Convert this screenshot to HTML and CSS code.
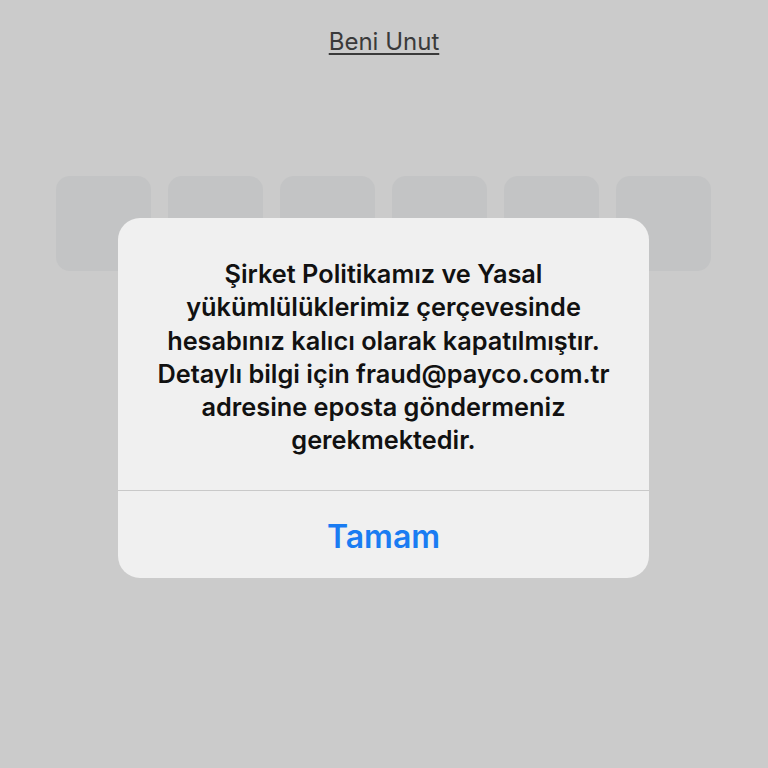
FILE: index.html
```html
<!DOCTYPE html>
<html lang="tr">
<head>
<meta charset="utf-8">
<link rel="stylesheet" href="styles.css">
</head>
<body>
<div class="screen">
  <div class="top">
    <a class="forgot">Beni Unut</a>
  </div>
  <div class="pins">
    <div class="pin"></div><div class="pin"></div><div class="pin"></div>
    <div class="pin"></div><div class="pin"></div><div class="pin"></div>
  </div>
  <div class="alert">
    <div class="message">Şirket Politikamız ve Yasal<br>yükümlülüklerimiz çerçevesinde<br>hesabınız kalıcı olarak kapatılmıştır.<br>Detaylı bilgi için fraud@payco.com.tr<br>adresine eposta göndermeniz<br>gerekmektedir.</div>
    <div class="action">Tamam</div>
  </div>
</div>
</body>
</html>
```
FILE: styles.css
```css
html, body {
  margin: 0;
  padding: 0;
}
body {
  width: 768px;
  height: 768px;
  background: #cbcbcb;
  font-family: Inter, "Noto Sans", sans-serif;
  overflow: hidden;
}
.screen {
  position: relative;
  width: 768px;
  height: 768px;
}
.top {
  display: flex;
  justify-content: center;
  padding-top: 27px;
  height: 176px;
  box-sizing: border-box;
}
.forgot {
  font-size: 24px;
  line-height: 30px;
  color: #3a3a3a;
  text-decoration: underline;
  text-underline-offset: 3px;
  text-decoration-thickness: 2px;
}
.pins {
  display: flex;
  gap: 17px;
  padding-left: 56px;
}
.pin {
  width: 95px;
  height: 95px;
  border-radius: 14px;
  background: #c3c4c5;
}
.alert {
  position: absolute;
  left: 118px;
  top: 218px;
  width: 531px;
  height: 360px;
  border-radius: 22px;
  background: #f0f0f0;
  display: flex;
  flex-direction: column;
}
.message {
  padding: 39px 10px 0;
  height: 273px;
  box-sizing: border-box;
  border-bottom: 1px solid #c9c9c9;
  text-align: center;
  font-size: 25.3px;
  font-weight: 600;
  line-height: 33.3px;
  color: #111;
}
.action {
  flex: 1;
  display: flex;
  align-items: center;
  justify-content: center;
  padding-top: 4px;
  font-size: 32px;
  font-weight: 600;
  color: #1a7cf2;
}
```
